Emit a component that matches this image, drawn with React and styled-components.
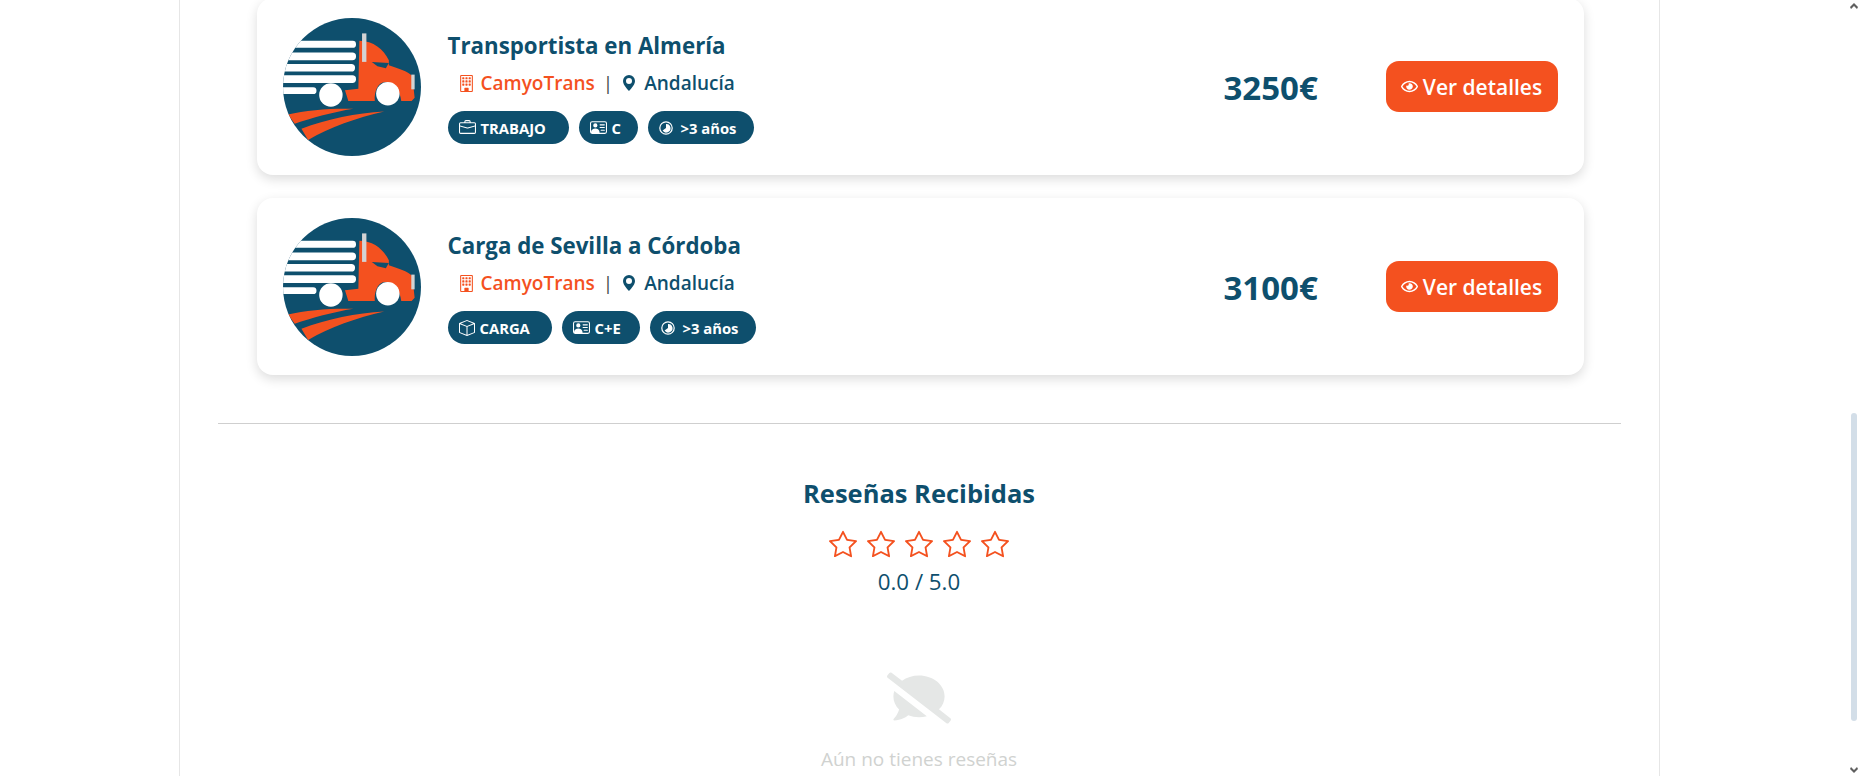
import styled, { createGlobalStyle } from 'styled-components';
import { BsBuilding, BsGeoAltFill, BsBriefcase, BsBox, BsPersonVcard, BsStar } from 'react-icons/bs';
import { FaCommentSlash, FaRegEye } from 'react-icons/fa';

const navy = '#0e4f6d';
const orange = '#f4511f';

const GlobalStyle = createGlobalStyle`
  html, body {
    margin: 0;
    padding: 0;
    background: #fff;
    height: 776px;
    overflow: hidden;
  }
  body {
    font-family: "Open Sans", "Noto Sans", "Liberation Sans", sans-serif;
  }
`;

const Page = styled.div`
  display: flex;
  height: 776px;
  overflow: hidden;
`;

const Main = styled.main`
  width: 1838px;
  display: flex;
  justify-content: center;
`;

const Panel = styled.div`
  width: 1481px;
  box-sizing: border-box;
  height: 776px;
  overflow: hidden;
  border-left: 1px solid #e6e6e6;
  border-right: 1px solid #e6e6e6;
  padding: 0 38px;
`;

const CardList = styled.div`
  display: flex;
  flex-direction: column;
  row-gap: 23px;
  margin: -2px 37px 0 39px;
`;

const Card = styled.article`
  height: 177px;
  box-sizing: border-box;
  padding: 0 26px;
  display: flex;
  align-items: center;
  background: #fff;
  border-radius: 16px;
  box-shadow: 0 4px 12px rgba(0, 0, 0, 0.14);
`;

const Logo = styled.svg`
  width: 138px;
  height: 138px;
  flex: none;
`;

const Info = styled.div`
  flex: 1;
  margin-left: 27px;
  padding-top: 3px;
  display: flex;
  flex-direction: column;
`;

const Title = styled.h3`
  margin: 0;
  font-size: 22.3px;
  line-height: 28px;
  font-weight: 700;
  color: ${navy};
`;

const MetaRow = styled.div`
  display: flex;
  align-items: center;
  margin: 11px 0 0 10px;
  height: 24px;
  font-size: 19px;
  font-weight: 600;
  color: ${navy};
`;

const Company = styled.span`
  display: flex;
  align-items: center;
  column-gap: 6px;
  color: ${orange};
`;

const Separator = styled.span`
  margin: 0 8px;
  font-weight: 400;
  color: #3f4a4a;
`;

const Place = styled.span`
  display: flex;
  align-items: center;
  column-gap: 7px;
`;

const Tags = styled.div`
  display: flex;
  column-gap: 10px;
  margin-top: 16px;
`;

const Tag = styled.span`
  display: flex;
  align-items: center;
  box-sizing: border-box;
  height: 33px;
  width: ${p => p.$width}px;
  padding-left: 11px;
  column-gap: ${p => p.$gap || 5}px;
  border-radius: 17px;
  background: ${navy};
  color: #fff;
  font-size: 14.8px;
  font-weight: 700;
`;

const Price = styled.div`
  width: 162px;
  padding-top: 2px;
  font-size: 33px;
  font-weight: 700;
  color: ${navy};
`;

const DetailsButton = styled.button`
  width: 172px;
  height: 51px;
  display: flex;
  align-items: center;
  justify-content: center;
  column-gap: 5px;
  padding: 0;
  border: 0;
  border-radius: 13px;
  background: ${orange};
  color: #fff;
  font-family: inherit;
  font-size: 21px;
  font-weight: 600;
`;

const Divider = styled.hr`
  margin: 48px 0 0;
  border: 0;
  border-top: 1px solid #cfcfcf;
`;

const Reviews = styled.section`
  display: flex;
  flex-direction: column;
  align-items: center;
  padding-top: 52px;
`;

const ReviewsTitle = styled.h2`
  margin: 0;
  font-size: 25.5px;
  line-height: 34px;
  font-weight: 700;
  color: ${navy};
`;

const Stars = styled.div`
  display: flex;
  column-gap: 10px;
  margin-top: 20px;
  color: ${orange};
  font-size: 28px;
  line-height: 0;
`;

const Score = styled.div`
  margin-top: 10px;
  font-size: 22.3px;
  line-height: 28px;
  color: ${navy};
`;

const Empty = styled.div`
  display: flex;
  flex-direction: column;
  align-items: center;
  margin-top: 70px;
  color: #e5e7e6;
`;

const EmptyText = styled.p`
  margin: 16px 0 0;
  font-size: 19px;
  line-height: 26px;
  color: #d0d2d0;
`;

const Scrollbar = styled.div`
  width: 25px;
  position: relative;
`;

const ScrollThumb = styled.div`
  position: absolute;
  top: 413px;
  left: 13px;
  width: 6px;
  height: 308px;
  border-radius: 3px;
  background: #d3dee8;
`;

const ScrollArrow = styled.svg`
  position: absolute;
  left: 12px;
  width: 8px;
  height: 6px;
  top: ${p => p.$top}px;
  fill: #5f5f5f;
`;

function PieIcon() {
  return (
    <svg width="14" height="14" viewBox="0 0 14 14">
      <circle cx="7" cy="7" r="6.2" fill="none" stroke="#fff" strokeWidth="1.2" />
      <path d="M7 3v4L3.6 9.6A4.3 4.3 0 1 0 7 3z" fill="#fff" />
    </svg>
  );
}

const jobs = [
  {
    title: 'Transportista en Almería',
    price: '3250€',
    tags: [
      { icon: <BsBriefcase size={17} />, label: 'TRABAJO', width: 121 },
      { icon: <BsPersonVcard size={17} />, label: 'C', width: 59 },
      { icon: <PieIcon />, label: '>3 años', width: 106, gap: 8 },
    ],
  },
  {
    title: 'Carga de Sevilla a Córdoba',
    price: '3100€',
    tags: [
      { icon: <BsBox size={16} />, label: 'CARGA', width: 104 },
      { icon: <BsPersonVcard size={17} />, label: 'C+E', width: 78 },
      { icon: <PieIcon />, label: '>3 años', width: 106, gap: 8 },
    ],
  },
];

function TruckLogo() {
  return (
    <Logo viewBox="40 24 412 412">
      <defs>
        <clipPath id="disc">
          <circle cx="246" cy="230" r="206" />
        </clipPath>
      </defs>
      <circle cx="246" cy="230" r="206" fill={navy} />
      <g clipPath="url(#disc)">
        <g fill="#fff">
          <rect x="20" y="92" width="238" height="21" rx="10" />
          <rect x="20" y="127" width="238" height="23" rx="11" />
          <rect x="20" y="161" width="235" height="23" rx="11" />
          <rect x="20" y="195" width="238" height="23" rx="11" />
          <rect x="20" y="231" width="120" height="20" rx="10" />
          <circle cx="183" cy="254" r="35" />
        </g>
        <path
          d="M268 92C310 92 340 118 356 150V165C385 175 415 183 426 198L433 262L424 272H393C390 240 370 215 345 215C325 215 312 240 314 272H235L225 240L265 235Z"
          fill={orange}
        />
        <path d="M305 155L356 158L347 174L322 168Z" fill={navy} />
        <circle cx="353" cy="250" r="35" fill="#fff" />
        <rect x="276" y="70" width="13" height="85" fill="#d3d3d3" />
        <rect x="423" y="193" width="10" height="44" fill="#d3d3d3" />
        <path d="M55 312C110 298 190 293 250 295C190 305 125 322 75 340Z" fill={orange} />
        <path d="M95 355C170 325 260 308 342 303C260 322 180 350 115 388Z" fill={orange} />
      </g>
    </Logo>
  );
}

const JobCard = ({ job }) => (
  <Card>
    <TruckLogo />
    <Info>
      <Title>{job.title}</Title>
      <MetaRow>
        <Company>
          <BsBuilding size={17} />
          CamyoTrans
        </Company>
        <Separator>|</Separator>
        <Place>
          <BsGeoAltFill size={16} />
          Andalucía
        </Place>
      </MetaRow>
      <Tags>
        {job.tags.map(tag => (
          <Tag key={tag.label} $width={tag.width} $gap={tag.gap}>
            {tag.icon}
            {tag.label}
          </Tag>
        ))}
      </Tags>
    </Info>
    <Price>{job.price}</Price>
    <DetailsButton>
      <FaRegEye size={17} />
      Ver detalles
    </DetailsButton>
  </Card>
);

const App = () => (
  <Page>
    <GlobalStyle />
    <Main>
      <Panel>
        <CardList>
          {jobs.map(job => (
            <JobCard key={job.title} job={job} />
          ))}
        </CardList>
        <Divider />
        <Reviews>
          <ReviewsTitle>Reseñas Recibidas</ReviewsTitle>
          <Stars>
            {[1, 2, 3, 4, 5].map(n => (
              <BsStar key={n} />
            ))}
          </Stars>
          <Score>0.0 / 5.0</Score>
          <Empty>
            <FaCommentSlash size={64} />
            <EmptyText>Aún no tienes reseñas</EmptyText>
          </Empty>
        </Reviews>
      </Panel>
    </Main>
    <Scrollbar>
      <ScrollArrow $top={3} viewBox="0 0 8 6">
        <path d="M4 0L8 4L7 6L4 3L1 6L0 4Z" />
      </ScrollArrow>
      <ScrollThumb />
      <ScrollArrow $top={767} viewBox="0 0 8 6">
        <path d="M4 6L8 2L7 0L4 3L1 0L0 2Z" />
      </ScrollArrow>
    </Scrollbar>
  </Page>
);

export default App;
